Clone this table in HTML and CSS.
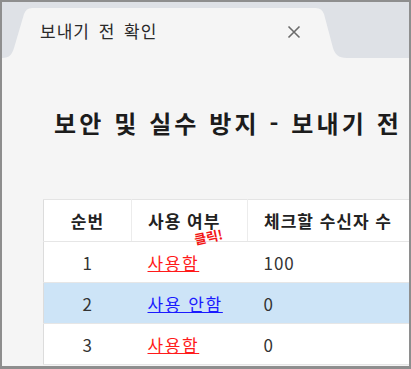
FILE: index.html
```html
<!DOCTYPE html>
<html lang="ko">
<head>
<meta charset="utf-8">
<link rel="stylesheet" href="styles.css">
</head>
<body>
<div class="window">
  <div class="tabstrip">
    <div class="tab">
      <svg class="tab-shape" width="345" height="50" viewBox="0 0 345 50">
        <path d="M0 50 C8 50 10 46 12 40 L22 6 C23.5 2 26 0 30 0 L314 0 C318 0 320.5 2 322 6 L331 40 C333 46 336 50 345 50 Z" fill="#f5f5f5"/>
      </svg>
      <span class="tab-title">보내기 전 확인</span>
      <svg class="tab-close" width="14" height="14" viewBox="0 0 14 14">
        <path d="M1.5 1.5 L12.5 12.5 M12.5 1.5 L1.5 12.5" stroke="#6b6b6b" stroke-width="1.6" fill="none"/>
      </svg>
    </div>
  </div>
  <div class="content">
    <h1 class="title">보안 및 실수 방지 - 보내기 전</h1>
    <table class="grid">
      <thead>
        <tr>
          <th class="c-no">순번</th>
          <th class="c-use">사용 여부<span class="click">클릭!</span></th>
          <th class="c-cnt">체크할 수신자 수</th>
        </tr>
      </thead>
      <tbody>
        <tr>
          <td class="c-no">1</td>
          <td class="c-use"><a class="on" href="#">사용함</a></td>
          <td class="c-cnt">100</td>
        </tr>
        <tr class="sel">
          <td class="c-no">2</td>
          <td class="c-use"><a class="off" href="#">사용 안함</a></td>
          <td class="c-cnt">0</td>
        </tr>
        <tr>
          <td class="c-no">3</td>
          <td class="c-use"><a class="on" href="#">사용함</a></td>
          <td class="c-cnt">0</td>
        </tr>
      </tbody>
    </table>
  </div>
</div>
</body>
</html>
```
FILE: styles.css
```css
html, body {
  margin: 0;
  padding: 0;
}
body {
  width: 411px;
  height: 369px;
  overflow: hidden;
  font-family: "Noto Sans CJK KR", "Noto Sans", sans-serif;
  color: #222;
}
.window {
  box-sizing: border-box;
  width: 411px;
  height: 369px;
  border: 2px solid #8e8e8e;
  border-bottom-width: 3px;
  background: #f5f5f5;
  display: flex;
  flex-direction: column;
  overflow: hidden;
}
.tabstrip {
  height: 56px;
  flex: none;
  background: #dee1e6;
  display: flex;
  align-items: flex-end;
}
.tab {
  position: relative;
  width: 345px;
  height: 50px;
  display: flex;
  align-items: flex-start;
}
.tab-shape {
  position: absolute;
  left: 0;
  top: 0;
}
.tab-title {
  position: relative;
  margin: 11px 0 0 38px;
  font-size: 17px;
  line-height: 24px;
  letter-spacing: 1px;
  word-spacing: 3px;
  color: #2a2a2a;
}
.tab-close {
  position: relative;
  margin: 17px 46px 0 auto;
}
.content {
  flex: 1;
  padding: 0 0 0 41px;
  overflow: hidden;
}
.title {
  margin: 48px 0 0 11px;
  font-size: 24px;
  line-height: 34px;
  font-weight: 700;
  color: #1c1c1c;
  white-space: nowrap;
  letter-spacing: 3.1px;
}
.grid {
  margin-top: 59px;
  border-collapse: collapse;
  background: #fff;
  width: 420px;
  table-layout: fixed;
  font-size: 17px;
  letter-spacing: 1px;
  border-left: 1px solid #dcdcdc;
  border-top: 1px solid #e4e4e4;
}
.grid th, .grid td {
  height: 40px;
  padding: 0;
  border-bottom: 1px solid #e6e6e6;
  white-space: nowrap;
  text-align: left;
}
.grid th {
  height: 41px;
  font-weight: 700;
  color: #222;
  border-right: 1px solid #ececec;
}
.grid .c-no {
  width: 87px;
  text-align: center;
}
.grid .c-use {
  width: 99px;
  padding-left: 16px;
  position: relative;
}
.grid .c-cnt {
  padding-left: 16px;
}
.grid td {
  color: #333;
}
.grid td.c-use {
  letter-spacing: 1.6px;
}
.grid tr.sel td {
  background: #cde4f7;
}
.grid a.on {
  color: #ff1a1a;
  text-decoration: underline;
}
.grid a.off {
  color: #1a1aff;
  text-decoration: underline;
}
.click {
  position: absolute;
  left: 62px;
  top: 30px;
  font-size: 13px;
  line-height: 13px;
  letter-spacing: 0;
  font-weight: 700;
  color: #f21414;
  transform: rotate(-12deg);
}
```
